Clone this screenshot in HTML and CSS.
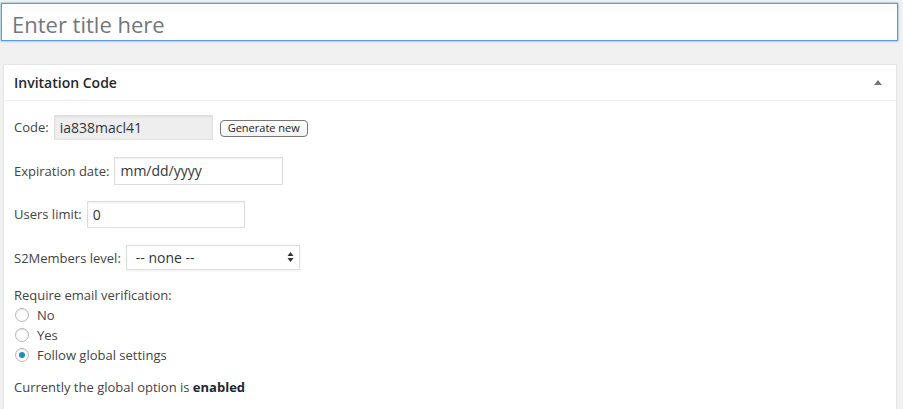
FILE: index.html
```html
<!DOCTYPE html>
<html lang="en">

<head>
  <meta charset="UTF-8">
  <meta name="viewport" content="width=device-width, initial-scale=1.0">
  <title>Add Invitation Code</title>
  <link rel="stylesheet" href="styles.css">
</head>

<body>
  <div class="editor">
    <input type="text" class="title-input" placeholder="Enter title here">

    <div class="postbox">
      <div class="postbox-header">
        <h2>Invitation Code</h2>
        <span class="toggle-arrow"></span>
      </div>
      <div class="postbox-inside">
        <div class="field-row">
          <label>Code:</label>
          <input type="text" class="code-input" value="ia838macl41" readonly>
          <button class="small-button">Generate new</button>
        </div>
        <div class="field-row">
          <label>Expiration date:</label>
          <input type="text" class="date-input" placeholder="mm/dd/yyyy">
        </div>
        <div class="field-row">
          <label>Users limit:</label>
          <input type="text" class="limit-input" value="0">
        </div>
        <div class="field-row">
          <label>S2Members level:</label>
          <div class="select-box">
            <span>-- none --</span>
            <svg width="7" height="12" viewBox="0 0 7 12">
              <path d="M3.5 1 L6.5 5 L0.5 5 Z" fill="#333" />
              <path d="M3.5 11 L6.5 7 L0.5 7 Z" fill="#333" />
            </svg>
          </div>
        </div>

        <div class="verification">
          <div class="line">Require email verification:</div>
          <div class="radio-line"><span class="radio"></span>No</div>
          <div class="radio-line"><span class="radio"></span>Yes</div>
          <div class="radio-line"><span class="radio checked"></span>Follow global settings</div>
        </div>

        <div class="global-note">Currently the global option is <b>enabled</b></div>
      </div>
    </div>
  </div>
</body>

</html>
```

FILE: styles.css
```css
body {
  margin: 0;
  background: #f1f1f1;
  font-family: 'Open Sans', sans-serif;
  font-size: 13px;
  color: #444;
  overflow: hidden;
}

.editor {
  padding: 3px 5px 0 1px;
}

.title-input {
  display: block;
  width: 100%;
  height: 38px;
  box-sizing: border-box;
  padding: 4px 10px 0;
  font-family: 'Open Sans', sans-serif;
  font-size: 22px;
  color: #32373c;
  background: #fff;
  border: 1px solid #5b9dd9;
  box-shadow: 0 0 2px rgba(30, 140, 190, 0.8);
  outline: none;
}

.title-input::placeholder {
  color: #72777c;
}

.postbox {
  margin: 23px 1px 0 2px;
  background: #fff;
  border: 1px solid #e5e5e5;
  border-bottom: none;
  box-shadow: 0 1px 1px rgba(0, 0, 0, 0.04);
}

.postbox-header {
  display: flex;
  align-items: center;
  justify-content: space-between;
  height: 35px;
  padding: 0 14px 0 10px;
  border-bottom: 1px solid #eee;
}

.postbox-header h2 {
  margin: 0;
  font-size: 14px;
  font-weight: 600;
  color: #23282d;
}

.toggle-arrow {
  width: 0;
  height: 0;
  border-left: 4px solid transparent;
  border-right: 4px solid transparent;
  border-bottom: 5px solid #72777c;
}

.postbox-inside {
  padding: 11px 10px 24px;
}

.field-row {
  display: flex;
  align-items: center;
  height: 30px;
  margin-bottom: 13.5px;
}

.field-row label {
  margin-right: 5px;
}

.field-row input {
  box-sizing: border-box;
  font-family: 'Open Sans', sans-serif;
  font-size: 14px;
  color: #32373c;
  padding: 3px 5px;
  border: 1px solid #ddd;
  box-shadow: inset 0 1px 2px rgba(0, 0, 0, 0.07);
  outline: none;
}

.field-row input::placeholder {
  color: #32373c;
}

.code-input {
  width: 159px;
  height: 25px;
  background: #eee;
  border-color: #e0e0e0 !important;
}

.date-input {
  width: 169px;
  height: 28px;
}

.limit-input {
  width: 158px;
  height: 27px;
}

.small-button {
  margin-left: 7px;
  margin-top: 2px;
  height: 17px;
  padding: 0 7px;
  font-family: 'Open Sans', sans-serif;
  font-size: 11px;
  color: #222;
  background: linear-gradient(#fff, #f3f3f3);
  border: 1px solid #777;
  border-radius: 4px;
  line-height: 14px;
}

.select-box {
  display: flex;
  align-items: center;
  justify-content: space-between;
  box-sizing: border-box;
  width: 174px;
  height: 25px;
  margin-top: -1px;
  padding: 0 5px 0 9px;
  font-size: 14px;
  color: #32373c;
  border: 1px solid #ddd;
  box-shadow: 0 1px 2px rgba(0, 0, 0, 0.07);
}

.verification {
  margin-top: -1px;
}

.line {
  line-height: 20px;
}

.radio-line {
  display: flex;
  align-items: center;
  height: 20px;
}

.radio {
  box-sizing: border-box;
  width: 14px;
  height: 14px;
  margin: 0 8px 0 1px;
  border: 1px solid #b4b9be;
  border-radius: 50%;
  box-shadow: inset 0 1px 2px rgba(0, 0, 0, 0.1);
  display: flex;
  align-items: center;
  justify-content: center;
}

.radio.checked::after {
  content: "";
  width: 6px;
  height: 6px;
  border-radius: 50%;
  background: #1e8cbe;
}

.global-note {
  margin-top: 12px;
  line-height: 20px;
}

.global-note b {
  font-weight: 700;
  color: #23282d;
}
```
